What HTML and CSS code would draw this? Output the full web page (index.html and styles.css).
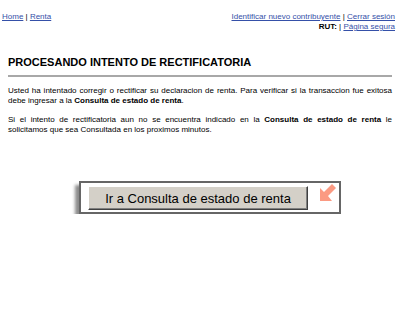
FILE: index.html
```html
<!DOCTYPE html>
<html lang="es">
<head>
    <meta charset="UTF-8">
    <title>Procesando intento de rectificatoria</title>
    <link rel="stylesheet" href="styles.css">
</head>
<body>
    <div class="topbar">
        <div class="nav-left">
            <a href="#">Home</a> | <a href="#">Renta</a>
        </div>
        <div class="nav-right">
            <a href="#">Identificar nuevo contribuyente</a> | <a href="#">Cerrar sesión</a><br>
            <b>RUT:</b> | <a href="#">Página segura</a>
        </div>
    </div>

    <div class="content">
        <h1>PROCESANDO INTENTO DE RECTIFICATORIA</h1>
        <div class="rule"></div>
        <p>Usted ha intentado corregir o rectificar su declaracion de renta. Para verificar si la transaccion fue exitosa debe ingresar a la <b>Consulta de estado de renta</b>.</p>
        <p>Si el intento de rectificatoria aun no se encuentra indicado en la <b>Consulta de estado de renta</b> le solicitamos que sea Consultada en los proximos minutos.</p>
    </div>

    <div class="action">
        <button class="go">Ir a Consulta de estado de renta</button>
        <svg class="arrow" width="17" height="18" viewBox="0 0 17 18">
            <polygon points="0,18 0,5 4,9 12,1 16,5 8,13 12,18" fill="#fb9a82"/>
        </svg>
    </div>
</body>
</html>
```

FILE: styles.css
```css
body {
    margin: 0;
    background: #ffffff;
    color: #000000;
    font-family: "Liberation Sans", Arial, sans-serif;
}

a {
    color: #3550a8;
    text-decoration: underline;
}

.topbar {
    display: flex;
    justify-content: space-between;
    padding: 12px 5px 0 2px;
    font-size: 8px;
    line-height: 10px;
}

.nav-right {
    text-align: right;
}

.content {
    padding: 0 8px;
}

h1 {
    font-size: 11px;
    line-height: 13px;
    margin: 24px 0 0 0;
}

.rule {
    height: 2px;
    background: #a8a8a8;
    margin-top: 6px;
}

p {
    font-size: 8px;
    line-height: 10px;
    text-align: justify;
    margin: 9px 0 0 0;
}

.action {
    display: flex;
    align-items: flex-start;
    width: 258px;
    height: 29px;
    margin: 46px 0 0 79px;
    padding: 0;
    border: 2px solid #666666;
    background: #ffffff;
    box-shadow: -4px 4px 3px rgba(0, 0, 0, 0.45);
}

.go {
    width: 220px;
    height: 24px;
    margin: 3px 0 0 7px;
    padding: 0;
    font-family: "Liberation Sans", Arial, sans-serif;
    font-size: 13px;
    color: #000000;
    background: #d4d0c8;
    border: 1px solid;
    border-color: #ffffff #404040 #404040 #ffffff;
    box-shadow: inset -1px -1px #808080;
    cursor: pointer;
}

.arrow {
    margin: 0 0 0 12px;
}
```
